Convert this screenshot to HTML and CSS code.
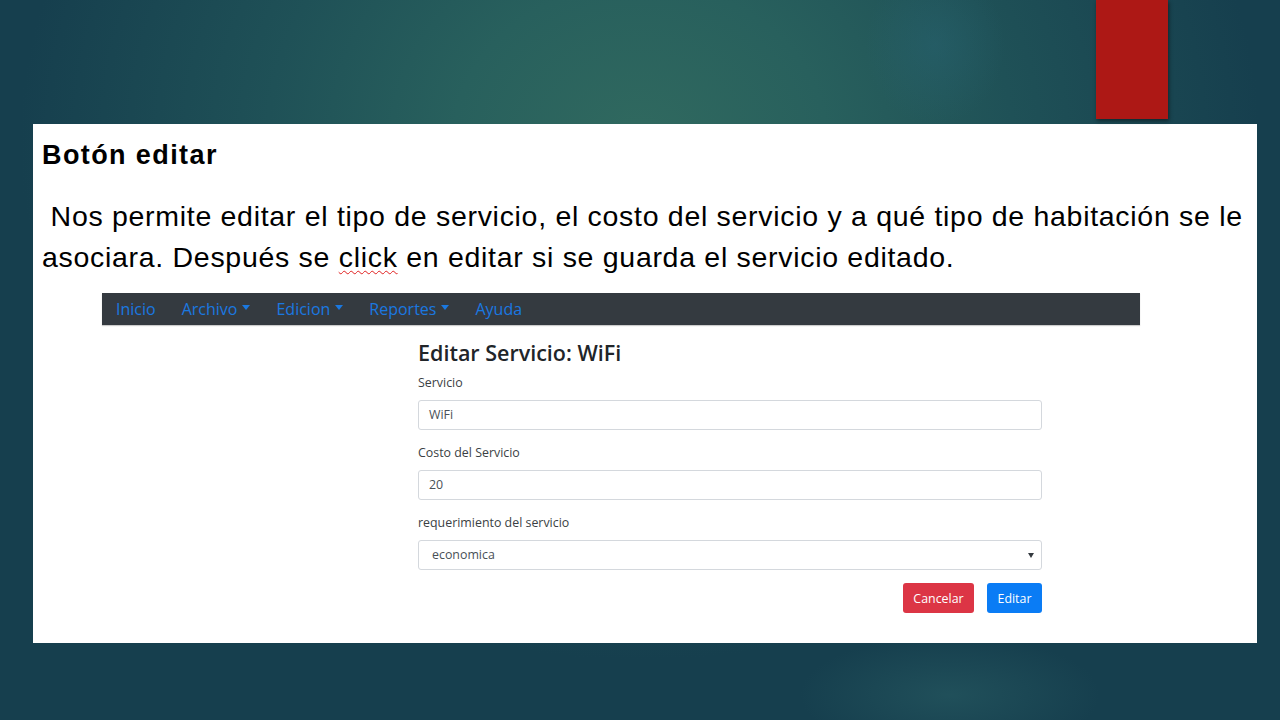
FILE: index.html
```html
<!DOCTYPE html>
<html lang="es">
<head>
<meta charset="utf-8">
<title>Botón editar</title>
<link rel="stylesheet" href="styles.css">
</head>
<body>
<div class="slide">
  <div class="accent"></div>
  <div class="panel">
    <h1 class="title">Botón editar</h1>
    <p class="desc">&nbsp;Nos permite editar el tipo de servicio, el costo del servicio y a qué tipo de habitación se le asociara. Después se <span class="spell">click</span> en editar si se guarda el servicio editado.</p>
    <div class="shot">
      <nav class="navbar">
        <a class="nav-link">Inicio</a>
        <a class="nav-link">Archivo<span class="caret"></span></a>
        <a class="nav-link">Edicion<span class="caret"></span></a>
        <a class="nav-link">Reportes<span class="caret"></span></a>
        <a class="nav-link">Ayuda</a>
      </nav>
      <form class="form">
        <h3 class="form-title">Editar Servicio: WiFi</h3>
        <div class="group">
          <label class="label">Servicio</label>
          <div class="control">WiFi</div>
        </div>
        <div class="group">
          <label class="label">Costo del Servicio</label>
          <div class="control">20</div>
        </div>
        <div class="group">
          <label class="label">requerimiento del servicio</label>
          <div class="control select">economica</div>
        </div>
        <div class="actions">
          <button type="button" class="btn btn-danger">Cancelar</button>
          <button type="button" class="btn btn-primary">Editar</button>
        </div>
      </form>
    </div>
  </div>
</div>
</body>
</html>
```
FILE: styles.css
```css
html, body {
  margin: 0;
  padding: 0;
}
body {
  width: 1280px;
  height: 720px;
  overflow: hidden;
  background:
    radial-gradient(ellipse 70px 80px at 935px 45px, rgba(40, 100, 115, 0.45), rgba(40, 100, 115, 0) 100%),
    radial-gradient(ellipse 150px 60px at 950px 695px, rgba(45, 100, 105, 0.45), rgba(45, 100, 105, 0) 100%),
    radial-gradient(ellipse 620px 520px at 640px 140px, #30695f 0%, #28605d 30%, #1f5157 60%, #163f4e 100%);
  background-color: #153c4c;
}
.slide {
  position: relative;
  width: 1280px;
  height: 720px;
  padding: 124px 0 0 33px;
  box-sizing: border-box;
}
.accent {
  position: absolute;
  left: 1096px;
  top: 0;
  width: 72px;
  height: 119px;
  background: #ad1815;
  box-shadow: 1px 2px 4px rgba(0, 0, 0, 0.45);
}
.panel {
  width: 1224px;
  height: 519px;
  background: #ffffff;
  box-sizing: border-box;
  padding: 16px 0 0 9px;
  font-family: "Liberation Sans", Arial, sans-serif;
  color: #000;
}
.title {
  margin: 0;
  font-size: 27px;
  line-height: 30px;
  font-weight: bold;
  letter-spacing: 1.4px;
}
.desc {
  margin: 26px 0 0 0;
  font-size: 28.5px;
  line-height: 41px;
  letter-spacing: 0.7px;
  width: 1212px;
}
.spell {
  text-decoration: underline wavy #e02020;
  text-decoration-thickness: 1px;
  text-underline-offset: 3px;
}
.shot {
  margin: 15px 0 0 60px;
  width: 1038px;
  font-family: "Open Sans", sans-serif;
}
.navbar {
  display: flex;
  align-items: center;
  gap: 26px;
  height: 32px;
  padding: 0 14px;
  background: #343a40;
  box-shadow: 0 1px 1px rgba(0, 0, 0, 0.2);
}
.nav-link {
  color: #1a78e0;
  font-size: 16px;
  line-height: 32px;
  display: flex;
  align-items: center;
}
.caret {
  display: inline-block;
  width: 0;
  height: 0;
  margin-left: 5px;
  margin-top: -3px;
  border-left: 4.5px solid transparent;
  border-right: 4.5px solid transparent;
  border-top: 5px solid #1a78e0;
}
.form {
  margin: 15px 0 0 316px;
  width: 624px;
  color: #212529;
}
.form-title {
  margin: 0 0 7px 0;
  font-size: 21.5px;
  line-height: 26px;
  font-weight: 600;
}
.group {
  margin-bottom: 13px;
}
.label {
  display: block;
  font-size: 12.4px;
  line-height: 19px;
  margin-bottom: 8px;
  color: #3b3f44;
}
.control {
  height: 30px;
  box-sizing: border-box;
  border: 1px solid #d4d8dd;
  border-radius: 3px;
  padding: 0 10px;
  font-size: 12.4px;
  line-height: 28px;
  color: #495057;
  background: #fff;
}
.select {
  position: relative;
  padding-left: 13px;
}
.select::after {
  content: "";
  position: absolute;
  right: 7px;
  top: 12px;
  border-left: 3px solid transparent;
  border-right: 3px solid transparent;
  border-top: 5px solid #343a40;
}
.actions {
  display: flex;
  justify-content: flex-end;
  gap: 13px;
  margin-top: 2px;
}
.btn {
  height: 30px;
  border: none;
  border-radius: 3px;
  color: #fff;
  font-family: "Open Sans", sans-serif;
  font-size: 12.4px;
  padding: 0;
}
.btn-danger {
  background: #dc3545;
  width: 71px;
}
.btn-primary {
  background: #0a7cf5;
  width: 55px;
}
```
